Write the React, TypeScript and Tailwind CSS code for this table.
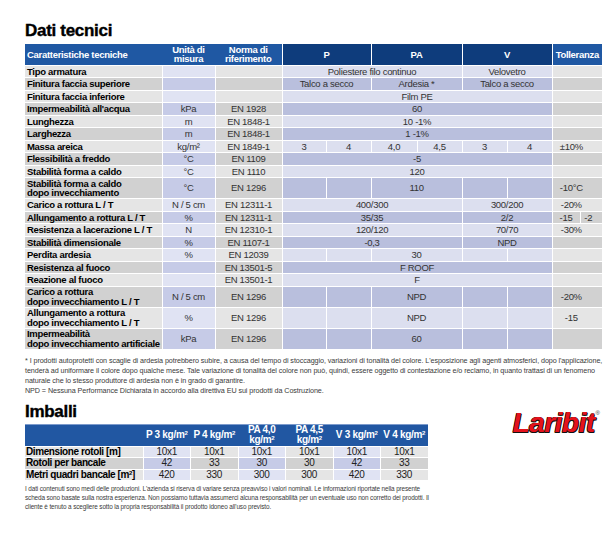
type Tone = 'gray' | 'unit' | 'val'
type Cell = readonly [string, number]

const tones: Record<Tone, readonly [string, string]> = {
  gray: ['bg-[#e5e5e5]', 'bg-[#d1d1d1]'],
  unit: ['bg-[#e0e3f3]', 'bg-[#c6cbe7]'],
  val: ['bg-[#dcdfef]', 'bg-[#b9bfdd]'],
}

type Row = {
  readonly label: readonly string[]
  readonly unit?: string
  readonly norma?: string
  readonly values: readonly Cell[]
  readonly tol: readonly Cell[]
}

const split = (mid: string): Cell[] => [
  ['', 1],
  ['', 1],
  [mid, 2],
  ['', 1],
  ['', 1],
]

const rows: readonly Row[] = [
  { label: ['Tipo armatura'], values: [['Poliestere filo continuo', 4], ['Velovetro', 2]], tol: [['', 2]] },
  {
    label: ['Finitura faccia superiore'],
    values: [['Talco a secco', 2], ['Ardesia *', 2], ['Talco a secco', 2]],
    tol: [['', 2]],
  },
  { label: ['Finitura faccia inferiore'], values: [['Film PE', 6]], tol: [['', 2]] },
  { label: ["Impermeabilità all'acqua"], unit: 'kPa', norma: 'EN 1928', values: [['60', 6]], tol: [['', 2]] },
  { label: ['Lunghezza'], unit: 'm', norma: 'EN 1848-1', values: [['10 -1%', 6]], tol: [['', 2]] },
  { label: ['Larghezza'], unit: 'm', norma: 'EN 1848-1', values: [['1 -1%', 6]], tol: [['', 2]] },
  {
    label: ['Massa areica'],
    unit: 'kg/m²',
    norma: 'EN 1849-1',
    values: [['3', 1], ['4', 1], ['4,0', 1], ['4,5', 1], ['3', 1], ['4', 1]],
    tol: [['±10%', 2]],
  },
  { label: ['Flessibilità a freddo'], unit: '°C', norma: 'EN 1109', values: [['-5', 6]], tol: [['', 2]] },
  { label: ['Stabilità forma a caldo'], unit: '°C', norma: 'EN 1110', values: [['120', 6]], tol: [['', 2]] },
  {
    label: ['Stabilità forma a caldo', 'dopo invecchiamento'],
    unit: '°C',
    norma: 'EN 1296',
    values: split('110'),
    tol: [['-10°C', 2]],
  },
  {
    label: ['Carico a rottura L / T'],
    unit: 'N / 5 cm',
    norma: 'EN 12311-1',
    values: [['400/300', 4], ['300/200', 2]],
    tol: [['-20%', 2]],
  },
  {
    label: ['Allungamento a rottura L / T'],
    unit: '%',
    norma: 'EN 12311-1',
    values: [['35/35', 4], ['2/2', 2]],
    tol: [['-15', 1], ['-2', 1]],
  },
  {
    label: ['Resistenza a lacerazione L / T'],
    unit: 'N',
    norma: 'EN 12310-1',
    values: [['120/120', 4], ['70/70', 2]],
    tol: [['-30%', 2]],
  },
  {
    label: ['Stabilità dimensionale'],
    unit: '%',
    norma: 'EN 1107-1',
    values: [['-0,3', 4], ['NPD', 2]],
    tol: [['', 2]],
  },
  { label: ['Perdita ardesia'], unit: '%', norma: 'EN 12039', values: split('30'), tol: [['', 2]] },
  { label: ['Resistenza al fuoco'], norma: 'EN 13501-5', values: [['F ROOF', 6]], tol: [['', 2]] },
  { label: ['Reazione al fuoco'], norma: 'EN 13501-1', values: [['F', 6]], tol: [['', 2]] },
  {
    label: ['Carico a rottura', 'dopo invecchiamento L / T'],
    unit: 'N / 5 cm',
    norma: 'EN 1296',
    values: split('NPD'),
    tol: [['-20%', 2]],
  },
  {
    label: ['Allungamento a rottura', 'dopo invecchiamento L / T'],
    unit: '%',
    norma: 'EN 1296',
    values: split('NPD'),
    tol: [['-15', 2]],
  },
  {
    label: ['Impermeabilità', 'dopo invecchiamento artificiale'],
    unit: 'kPa',
    norma: 'EN 1296',
    values: split('60'),
    tol: [['', 2]],
  },
]

const packCols = ['P 3', 'P 4', 'PA 4,0', 'PA 4,5', 'V 3', 'V 4']
const packRows: readonly { label: React.ReactNode; values: string[] }[] = [
  { label: 'Dimensione rotoli [m]', values: ['10x1', '10x1', '10x1', '10x1', '10x1', '10x1'] },
  { label: 'Rotoli per bancale', values: ['42', '33', '30', '30', '42', '33'] },
  {
    label: (
      <>
        Metri quadri bancale [m<sup className="text-[6px] leading-none">2</sup>]
      </>
    ),
    values: ['420', '330', '300', '300', '420', '330'],
  },
]

export default function App() {
  return (
    <div className="w-[611px] h-[544px] overflow-hidden bg-white pl-[25px] pt-[22px] text-black [font-family:'Liberation_Sans',Arial,sans-serif]">
      <h1 className="text-[17px] leading-[18px] font-bold tracking-[-0.3px] [-webkit-text-stroke:0.4px_black] mb-[4px]">
        Dati tecnici
      </h1>
      <TechTable />
      <div className="mt-[6px] text-[7.2px] leading-[10px] tracking-[-0.08px] text-[#3a3a3a] whitespace-nowrap">
        <div>
          * I prodotti autoprotetti con scaglie di ardesia potrebbero subire, a causa del tempo di stoccaggio,
          variazioni di tonalità del colore. L'esposizione agli agenti atmosferici, dopo l'applicazione,
        </div>
        <div>
          tenderà ad uniformare il colore dopo qualche mese. Tale variazione di tonalità del colore non può, quindi,
          essere oggetto di contestazione e/o reclamo, in quanto trattasi di un fenomeno
        </div>
        <div>naturale che lo stesso produttore di ardesia non è in grado di garantire.</div>
        <div>NPD = Nessuna Performance Dichiarata in accordo alla direttiva EU sui prodotti da Costruzione.</div>
      </div>
      <div className="flex items-start mt-[7px]">
        <div>
          <h2 className="text-[17px] leading-[18px] font-bold tracking-[-0.3px] [-webkit-text-stroke:0.4px_black] mb-[3px]">
            Imballi
          </h2>
          <PackTable />
        </div>
        <Logo />
      </div>
      <div className="mt-[3px] text-[6.4px] leading-[9px] tracking-[-0.12px] text-[#3a3a3a] whitespace-nowrap">
        <div>
          I dati contenuti sono medi delle produzioni. L'azienda si riserva di variare senza preavviso i valori
          nominali. Le informazioni riportate nella presente
        </div>
        <div>
          scheda sono basate sulla nostra esperienza. Non possiamo tuttavia assumerci alcuna responsabilità per un
          eventuale uso non corretto dei prodotti. Il
        </div>
        <div>cliente è tenuto a scegliere sotto la propria responsabilità il prodotto idoneo all'uso previsto.</div>
      </div>
    </div>
  )
}

function TechTable() {
  const widths = [137, 53, 67, 44, 45, 46, 45, 45, 45, 28, 22]
  return (
    <table className="table-fixed border-collapse w-[577px] text-[9.5px] leading-[9.5px] tracking-[-0.3px] whitespace-nowrap">
      <colgroup>
        {widths.map((w, i) => (
          <col key={i} style={{ width: w }} />
        ))}
      </colgroup>
      <thead>
        <tr className="h-[21px] text-white font-bold">
          <th className="bg-[#1f58a3] text-left pl-[2px] font-bold border-b border-white">Caratteristiche tecniche</th>
          <th className="bg-[#1f58a3] font-bold border-b border-white">
            Unità di
            <br />
            misura
          </th>
          <th className="bg-[#1f58a3] font-bold border-b border-white">
            Norma di
            <br />
            riferimento
          </th>
          <th colSpan={2} className="bg-[#0e3c7c] border border-white border-t-0">
            P
          </th>
          <th colSpan={2} className="bg-[#0e3c7c] border border-white border-t-0">
            PA
          </th>
          <th colSpan={2} className="bg-[#0e3c7c] border border-white border-t-0">
            V
          </th>
          <th colSpan={2} className="bg-[#1f58a3] border border-white border-t-0 border-r-0">
            Tolleranza
          </th>
        </tr>
      </thead>
      <tbody>
        {rows.map((r, i) => {
          const d = i % 2
          const tall = r.label.length > 1
          return (
            <tr key={i} className={tall ? 'h-[21px]' : 'h-[12.5px]'}>
              <td className={`${tones.gray[d]} border border-white border-l-0 pl-[2px] p-0 font-bold text-black`}>
                {r.label.map((l, k) => (
                  <div key={k}>{l}</div>
                ))}
              </td>
              <td className={`${tones.unit[d]} border border-white p-0 text-center text-[#333]`}>{r.unit ?? ''}</td>
              <td className={`${tones.gray[d]} border border-white p-0 text-center text-[#333]`}>{r.norma ?? ''}</td>
              {r.values.map(([t, s], k) => (
                <td key={k} colSpan={s} className={`${tones.val[d]} border border-white p-0 text-center text-[#333]`}>
                  {t}
                </td>
              ))}
              {r.tol.map(([t, s], k) => (
                <td
                  key={k}
                  colSpan={s}
                  className={`${tones.gray[d]} border border-white border-r-0 p-0 text-center text-[#333] ${
                    s === 2 ? 'pr-[12px]' : k === 1 ? 'pr-[6px]' : ''
                  }`}
                >
                  {t}
                </td>
              ))}
            </tr>
          )
        })}
      </tbody>
    </table>
  )
}

function PackTable() {
  return (
    <table className="table-fixed border-collapse w-[403px] text-[10px] leading-[10px] tracking-[-0.3px] whitespace-nowrap">
      <colgroup>
        <col style={{ width: 118 }} />
        {packCols.map((c) => (
          <col key={c} style={{ width: 47.5 }} />
        ))}
      </colgroup>
      <thead>
        <tr className="h-[22px] bg-[#2157a2] text-white">
          <th className="border-t border-[#7d9bcc] p-0" />
          {packCols.map((c) => {
            const two = c.startsWith('PA')
            return (
              <th key={c} className="border-t border-[#7d9bcc] p-0 font-bold text-center leading-[10px]">
                {c}
                {two ? <br /> : ' '}
                kg/m<sup className="text-[6px] leading-none">2</sup>
              </th>
            )
          })}
        </tr>
      </thead>
      <tbody>
        {packRows.map((r, i) => {
          const d = i === 1 ? 1 : 0
          return (
            <tr key={i} className="h-[11.5px]">
              <td className={`${tones.gray[d]} border-y border-white p-0 font-bold text-[10px] tracking-[-0.4px] pl-[1px]`}>
                {r.label}
              </td>
              {r.values.map((v, k) => (
                <td
                  key={k}
                  className={`${k % 2 === 0 ? tones.unit[d] : tones.gray[d]} border border-white p-0 text-center text-[#222]`}
                >
                  {v}
                </td>
              ))}
            </tr>
          )
        })}
      </tbody>
    </table>
  )
}

function Logo() {
  return (
    <div className="ml-[84px] mt-[7px] flex items-start">
      <span className="text-[28px] leading-[26px] font-bold italic tracking-[-0.5px] text-[#e5121c] [text-shadow:1px_1px_0_#111,-0.5px_-0.5px_0_#111,0.5px_-0.5px_0_#111,-0.5px_0.5px_0_#111]">
        Laribit
      </span>
      <span className="text-[6px] leading-[6px] ml-[1px] text-[#333]">®</span>
    </div>
  )
}
